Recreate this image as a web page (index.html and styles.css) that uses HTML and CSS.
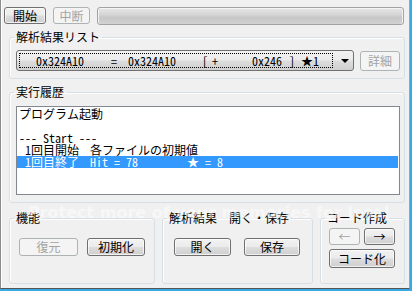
FILE: index.html
```
<!DOCTYPE html>
<html lang="ja">
<head>
  <meta charset="UTF-8">
  <title>解析</title>
  <link rel="stylesheet" href="styles.css">
</head>
<body>

<div class="frame">
<div class="window">

  <div class="toolbar">
    <button class="btn start">開始</button>
    <button class="btn stop" disabled>中断</button>
    <div class="progress"></div>
  </div>

  <fieldset class="group results">
    <legend>解析結果リスト</legend>
    <div class="result-row">
      <div class="combo">
        <div class="combo-focus">
          <span class="c1">0x324A10</span><span class="c2">=</span><span class="c3">0x324A10</span><span class="c4">[</span><span class="c5">+</span><span class="c6">0x246</span><span class="c7">]</span><span class="c8">★1</span>
        </div>
        <span class="combo-arrow"></span>
      </div>
      <button class="btn detail" disabled>詳細</button>
    </div>
  </fieldset>

  <fieldset class="group history">
    <legend>実行履歴</legend>
    <div class="listbox">
      <div class="item">プログラム起動</div>
      <div class="item"></div>
      <div class="item">--- Start ---</div>
      <div class="item"><span class="col-a">1回目開始</span><span class="col-b">各ファイルの初期値</span></div>
      <div class="item selected"><span class="col-a">1回目終了</span><span class="col-b">Hit = 78</span><span class="col-c">★ = 8</span></div>
    </div>
  </fieldset>

  <div class="bottom">
    <fieldset class="group func">
      <legend>機能</legend>
      <div class="btn-row">
        <button class="btn restore" disabled>復元</button>
        <button class="btn init">初期化</button>
      </div>
    </fieldset>
    <fieldset class="group file">
      <legend>解析結果　開く・保存</legend>
      <div class="btn-row">
        <button class="btn open">開く</button>
        <button class="btn save">保存</button>
      </div>
    </fieldset>
    <fieldset class="group code">
      <legend>コード作成</legend>
      <div class="arrows">
        <button class="btn arrow" disabled>←</button>
        <button class="btn arrow">→</button>
      </div>
      <button class="btn encode">コード化</button>
    </fieldset>
  </div>

  <div class="watermark">Protect more of your memories for less!</div>
</div>
</div>

</body>
</html>
```

FILE: styles.css
```
body {
  margin: 0;
  background-color: #f0f0f0;
  font-family: "Noto Sans Mono CJK JP", "Noto Sans CJK JP", sans-serif;
  font-size: 12px;
  color: #000;
}
.frame {
  width: 412px;
  height: 291px;
  box-sizing: border-box;
  border-right: 2px solid #3aa8e2;
  border-bottom: 2px solid #3aa8e2;
}
.window {
  position: relative;
  height: 100%;
  box-sizing: border-box;
  border-left: 1px solid #8c8c8c;
  border-right: 1px solid #9aa3a8;
  border-bottom: 1px solid #555;
  box-shadow: inset 1px 0 0 #fff;
  padding: 7px 0 0 3px;
}

/* buttons */
.btn {
  height: 17px;
  padding: 0;
  margin: 0;
  border: 1px solid #707070;
  border-radius: 3px;
  background: linear-gradient(#f2f2f2 0%, #ebebeb 48%, #dddddd 52%, #cfcfcf 100%);
  box-shadow: inset 0 0 0 1px rgba(255, 255, 255, 0.7);
  font-family: inherit;
  font-size: 12px;
  line-height: 14px;
  color: #000;
}
.btn:disabled {
  border-color: #adb2b5;
  background: #f4f4f4;
  color: #a3a3a3;
  box-shadow: none;
}

.toolbar {
  display: flex;
  gap: 7px;
  height: 17px;
}
.start { width: 42px; }
.stop { width: 37px; }
.progress {
  width: 307px;
  height: 18px;
  box-sizing: border-box;
  border: 1px solid #a2a2a2;
  border-radius: 3px;
  background: linear-gradient(#e6e6e6 0%, #d6d6d6 40%, #c7c7c7 60%, #d2d2d2 100%);
  box-shadow: inset 1px 0 0 #f2f2f2, inset -1px 0 0 #f2f2f2, inset 0 1px 0 #f4f4f4;
}

/* group boxes */
.group {
  margin: 0;
  min-width: 0;
  box-sizing: border-box;
  padding-left: 0;
  padding-right: 0;
  border: 1px solid #d5dfe5;
  border-radius: 3px;
  box-shadow: inset 1px 1px 0 #fff;
}
.group legend {
  padding: 0 2px;
  margin-left: 4px;
  font-family: "Noto Sans CJK JP", sans-serif;
  line-height: 12px;
  height: 12px;
  white-space: nowrap;
}
.results {
  width: 396px;
  margin: 7px 0 0 5px;
  padding-top: 7px;
  padding-bottom: 7px;
}
.result-row {
  display: flex;
  gap: 6px;
  margin-left: 6px;
}
.combo {
  position: relative;
  width: 338px;
  height: 21px;
  box-sizing: border-box;
  border: 1px solid #707070;
  border-radius: 3px;
  background: linear-gradient(#f2f2f2 0%, #ebebeb 48%, #dddddd 52%, #cfcfcf 100%);
  padding: 2px;
}
.combo-focus {
  width: 314px;
  height: 15px;
  box-sizing: border-box;
  border: 1px dotted #000;
  padding-left: 16px;
  white-space: nowrap;
  line-height: 13px;
  font-size: 12px;
}
.combo-focus span {
  display: inline-block;
}
.c1 { width: 75px; }
.c2 { width: 17px; }
.c3 { width: 74px; }
.c4 { width: 10px; }
.c5 { width: 40px; }
.c6 { width: 37px; }
.c7 { width: 12px; }
.combo-arrow {
  position: absolute;
  left: 324px;
  top: 8px;
  border-left: 4px solid transparent;
  border-right: 4px solid transparent;
  border-top: 4px solid #000;
}
.detail {
  width: 40px;
  height: 20px;
  margin-top: 1px;
}

.history {
  width: 396px;
  margin: 7px 0 0 5px;
  padding-top: 8px;
  padding-bottom: 7px;
}
.listbox {
  width: 384px;
  height: 89px;
  margin-left: 6px;
  box-sizing: border-box;
  border: 1px solid #828790;
  background: #fff;
  padding-top: 1px;
}
.item {
  height: 12px;
  line-height: 12px;
  padding-left: 2px;
  margin-right: 1px;
  white-space: nowrap;
}
.item span {
  display: inline-block;
}
.col-a {
  width: 65px;
  margin-left: 6px;
}
.col-b { width: 97px; }
.selected {
  background: #3399ff;
  color: #fff;
}

.bottom {
  display: flex;
  gap: 7px;
  margin: 9px 0 0 5px;
}
.bottom .group {
  padding-top: 14px;
  padding-bottom: 15px;
}
.func { width: 146px; }
.file { width: 151px; }
.code { width: 85px; }
.btn-row {
  display: flex;
  gap: 9px;
}
.func .btn-row { margin-left: 9px; }
.file .btn-row { margin-left: 11px; }
.btn-row .btn {
  height: 18px;
}
.restore { width: 59px; }
.init { width: 58px; }
.open { width: 57px; }
.save { width: 56px; margin-left: 4px; }
.bottom .code {
  padding-top: 4px;
}
.arrows {
  display: flex;
  gap: 4px;
  margin-left: 8px;
}
.arrow {
  width: 31px;
  height: 17px;
}
.encode {
  width: 66px;
  height: 19px;
  margin: 4px 0 0 8px;
}

.watermark {
  position: absolute;
  left: 27px;
  top: 205px;
  font-family: "DejaVu Sans", sans-serif;
  font-size: 16px;
  line-height: 16px;
  font-weight: bold;
  color: rgba(255, 255, 255, 0.5);
  white-space: nowrap;
  pointer-events: none;
}
```
